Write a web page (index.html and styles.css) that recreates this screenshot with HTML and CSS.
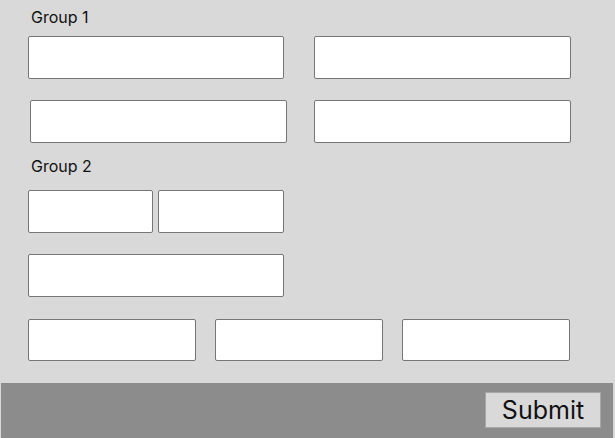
FILE: index.html
```html
<!DOCTYPE html>
<html>
<head>
<meta charset="utf-8">
<link rel="stylesheet" href="styles.css">
</head>
<body>
<div class="page">
  <main class="form">
    <div class="group-label">Group 1</div>
    <div class="grid two">
      <input class="field" type="text">
      <input class="field" type="text">
    </div>
    <div class="grid two row-gap">
      <input class="field shift" type="text">
      <input class="field" type="text">
    </div>
    <div class="group-label second">Group 2</div>
    <div class="grid half">
      <input class="field" type="text">
      <input class="field" type="text">
    </div>
    <div class="grid single row-gap">
      <input class="field" type="text">
    </div>
    <div class="grid three row-gap-lg">
      <input class="field" type="text">
      <input class="field" type="text">
      <input class="field" type="text">
    </div>
  </main>
  <footer class="footer">
    <button class="submit" type="button">Submit</button>
  </footer>
</div>
</body>
</html>
```
FILE: styles.css
```css
html, body {
  margin: 0;
  padding: 0;
  background: #d9d9d9;
}
.page {
  width: 615px;
  height: 438px;
  display: flex;
  flex-direction: column;
  font-family: "Inter", "Liberation Sans", sans-serif;
}
.form {
  flex: 1;
  padding: 8px 0 0 28px;
}
.group-label {
  font-size: 16px;
  line-height: 19px;
  color: #111;
  padding-left: 3px;
  margin-bottom: 9px;
}
.group-label.second {
  margin-top: 14px;
  margin-bottom: 14px;
}
.grid {
  display: grid;
  height: 43px;
}
.grid.two {
  grid-template-columns: 256px 257px;
  column-gap: 30px;
}
.grid.half {
  grid-template-columns: 125px 126px;
  column-gap: 5px;
}
.grid.single {
  grid-template-columns: 256px;
}
.grid.three {
  grid-template-columns: 168px 168px 168px;
  column-gap: 19px;
  height: 42px;
}
.row-gap {
  margin-top: 21px;
}
.row-gap-lg {
  margin-top: 22px;
}
.field {
  box-sizing: border-box;
  margin: 0;
  height: 100%;
  width: 100%;
  background: #fff;
  border: 1px solid #767676;
  border-radius: 2px;
  padding: 0;
}
.field.shift {
  margin-left: 2px;
  width: 257px;
}
.footer {
  height: 55px;
  margin: 0 2px 0 1px;
  background: #8c8c8c;
  display: flex;
  justify-content: flex-end;
  align-items: flex-start;
  padding: 9px 12px 0 0;
  box-sizing: border-box;
}
.submit {
  width: 116px;
  height: 36px;
  background: #d9d9d9;
  border: 1px solid #a6a6a6;
  border-radius: 0;
  font-family: "Inter", "Liberation Sans", sans-serif;
  font-size: 25px;
  color: #111;
  padding: 0;
}
```
